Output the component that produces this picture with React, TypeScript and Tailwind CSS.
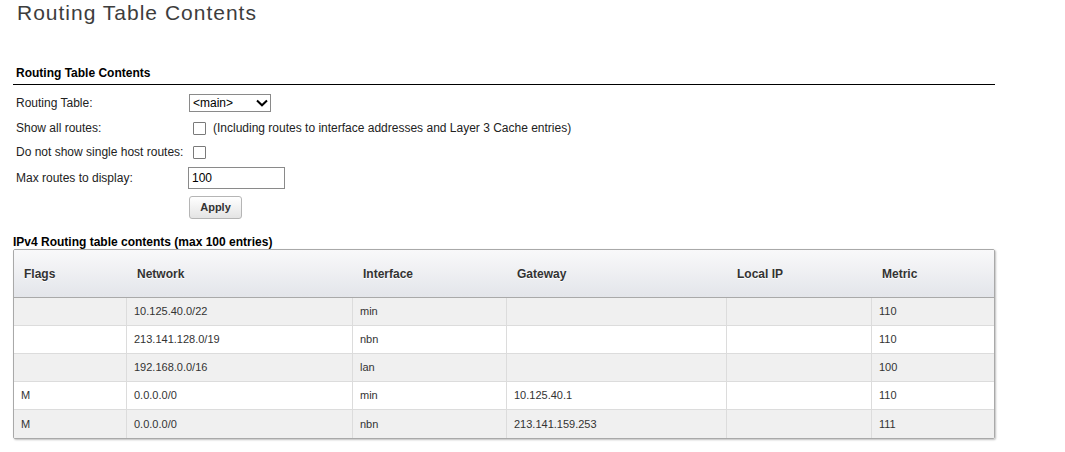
import React from "react";

const rows = [
  { flags: "", network: "10.125.40.0/22", iface: "min", gw: "", local: "", metric: "110" },
  { flags: "", network: "213.141.128.0/19", iface: "nbn", gw: "", local: "", metric: "110" },
  { flags: "", network: "192.168.0.0/16", iface: "lan", gw: "", local: "", metric: "100" },
  { flags: "M", network: "0.0.0.0/0", iface: "min", gw: "10.125.40.1", local: "", metric: "110" },
  { flags: "M", network: "0.0.0.0/0", iface: "nbn", gw: "213.141.159.253", local: "", metric: "111" },
];

const colW = ["w-[113px]", "w-[226px]", "w-[154px]", "w-[220px]", "w-[145px]", "flex-1"];
const heads = ["Flags", "Network", "Interface", "Gateway", "Local IP", "Metric"];

function Checkbox() {
  return <div className="w-[13px] h-[13px] border border-[#7a7a7a] bg-white rounded-[1px]" />;
}

export default function App() {
  return (
    <div className="w-[1065px] h-[452px] bg-white text-[#222] text-[12px] overflow-hidden" style={{ fontFamily: '"Liberation Sans", Arial, sans-serif' }}>
      <h1 className="pl-[17px] pt-[1px] h-[26px] text-[21px] leading-[24px] tracking-[1px] text-[#3d3d3d]">Routing Table Contents</h1>

      <div className="ml-[13px] w-[982px] mt-[40px]">
        <div className="pl-[3px] font-bold text-[12px] leading-[14px] text-black">Routing Table Contents</div>
        <div className="mt-[4px] h-px bg-black" />

        <div className="pl-[3px] mt-[7px]">
          <div className="flex items-center h-[22px]">
            <div className="w-[173px]">Routing Table:</div>
            <div className="w-[82px] h-[18px] border border-[#8a8a8a] flex items-center justify-between pl-[3px] pr-[2px] text-[12px] text-black">
              <span>&lt;main&gt;</span>
              <svg width="12" height="8" viewBox="0 0 12 8">
                <path d="M1 1.5 L6 6.3 L11 1.5" fill="none" stroke="#000" strokeWidth="2" />
              </svg>
            </div>
          </div>
          <div className="flex items-center h-[22px] mt-[3px]">
            <div className="w-[177px]">Show all routes:</div>
            <Checkbox />
            <div className="ml-[7px]">(Including routes to interface addresses and Layer 3 Cache entries)</div>
          </div>
          <div className="flex items-center h-[22px] mt-[2px]">
            <div className="w-[177px]">Do not show single host routes:</div>
            <Checkbox />
          </div>
          <div className="flex items-center h-[23px] mt-[3px]">
            <div className="w-[172px]">Max routes to display:</div>
            <div className="w-[97px] h-[22px] border border-[#8a8a8a] flex items-center pl-[3px] text-[12px] text-black">100</div>
          </div>
          <div className="flex items-center h-[24px] mt-[6px]">
            <div className="w-[173px]" />
            <div className="w-[53px] h-[23px] rounded-[3px] border border-[#b5b5b5] bg-gradient-to-b from-[#ffffff] to-[#e4e4e4] flex items-center justify-center font-bold text-[11px] text-[#333]">Apply</div>
          </div>
        </div>

        <div className="mt-[16px] font-bold text-[12px] leading-[14px] text-black">IPv4 Routing table contents (max 100 entries)</div>

        <div className="mt-0 border border-[#a9a9a9] rounded-[2px] shadow-[1px_1px_2px_rgba(0,0,0,0.25)] overflow-hidden">
          <div className="flex h-[48px] border-b border-[#a9a9a9] bg-gradient-to-b from-[#f9f9fa] to-[#e3e5ea]">
            {heads.map((h, i) => (
              <div key={h} className={`${colW[i]} pl-[10px] pt-[15px] font-bold text-[12px] text-[#333] [text-shadow:0_1px_0_#fff]`}>{h}</div>
            ))}
          </div>
          {rows.map((r, ri) => {
            const vals = [r.flags, r.network, r.iface, r.gw, r.local, r.metric];
            return (
              <div key={ri} className={`flex h-[28px] ${ri < rows.length - 1 ? "border-b border-[#dcdcdc]" : ""} ${ri % 2 === 0 ? "bg-[#f0f0f0]" : "bg-white"}`}>
                {vals.map((v, ci) => (
                  <div key={ci} className={`${colW[ci]} ${ci < 5 ? "border-r border-[#dcdcdc]" : ""} flex items-center pl-[7px] text-[11px] text-[#333]`}>{v}</div>
                ))}
              </div>
            );
          })}
        </div>
      </div>
    </div>
  );
}
